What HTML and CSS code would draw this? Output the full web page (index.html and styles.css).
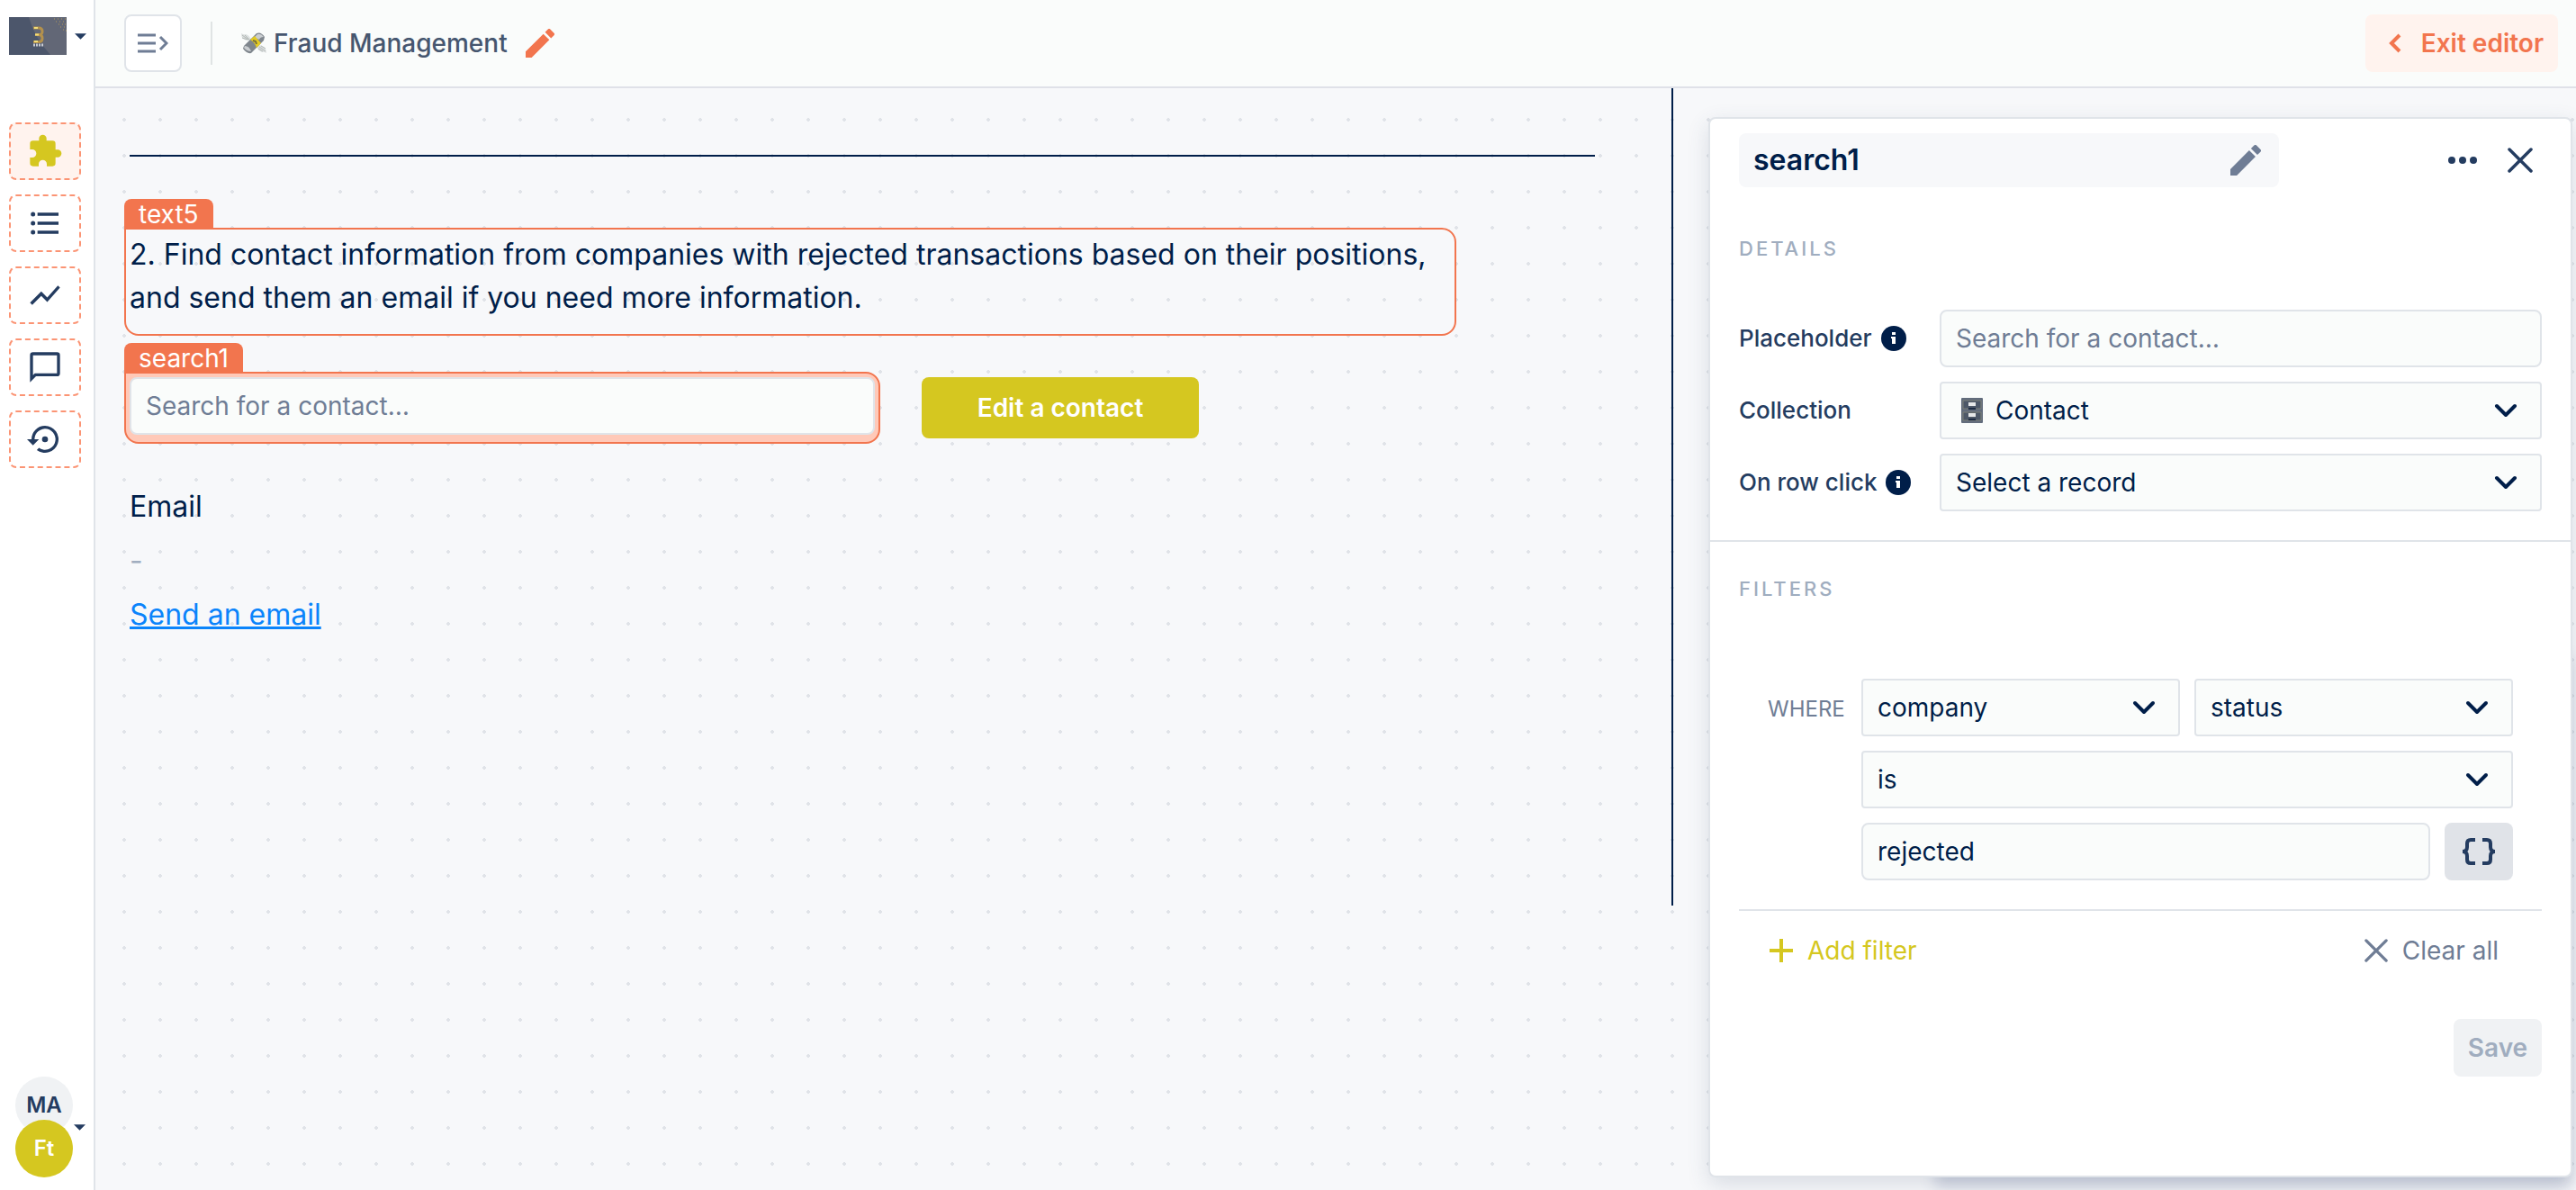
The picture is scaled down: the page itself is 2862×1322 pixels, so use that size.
FILE: index.html
```html
<!DOCTYPE html>
<html lang="en">
<head>
<meta charset="utf-8">
<title>Fraud Management</title>
<link rel="stylesheet" href="styles.css">
</head>
<body>
<svg class="sprite" aria-hidden="true">
  <symbol id="chevron" viewBox="0 0 26 16"><path d="M3 3l10 10L23 3" fill="none" stroke="currentColor" stroke-width="4" stroke-linecap="round" stroke-linejoin="round"/></symbol>
  <symbol id="cross" viewBox="0 0 28 28"><path d="M2 2l24 24M26 2L2 26" fill="none" stroke="currentColor" stroke-width="3.500" stroke-linecap="round"/></symbol>
  <symbol id="pencil" viewBox="3 3 18 18"><path d="M3 17.25V21h3.75L17.81 9.94l-3.75-3.75L3 17.25zM20.71 7.04a1 1 0 0 0 0-1.41l-2.34-2.34a1 1 0 0 0-1.41 0l-1.83 1.83 3.75 3.75 1.83-1.83z" fill="currentColor"/></symbol>
  <symbol id="caret" viewBox="0 0 14 7"><path d="M0 0h14L7 7z" fill="currentColor"/></symbol>
  <symbol id="info" viewBox="0 0 28 28"><circle cx="14" cy="14" r="14" fill="currentColor"/><path d="M12 7h4v3h-4zM11 12h5v8h-4v-6h-1z" fill="#fff"/></symbol>
</svg>

<nav class="sidebar" aria-label="Main">
  <button class="workspace-switch" aria-label="Switch workspace">
    <svg class="logo" viewBox="0 0 64 42">
      <rect width="64" height="42" fill="#4c566b"/>
      <path d="M22 0h42v42H46Q28 22 22 0z" fill="#626776"/>
      <path d="M50 2h1M54 2h1M58 2h1M62 2h1M52 5h1M56 5h1M60 5h1M55 8h1M59 8h1M62 8h1M57 11h1M61 11h1M60 14h1M63 15h1" stroke="#b39a5d" stroke-width="1"/>
      <path d="M27 12h6q4 0 4 4t-4 3.500h-4 4q4 0 4 4t-4 4h-6" fill="none" stroke="#b4914c" stroke-width="3"/>
      <path d="M28 12h4M29 19.500h4M28 27h4" stroke="#f3e07a" stroke-width="2"/>
      <path d="M27 31h11" stroke="#c9ccd3" stroke-width="3" stroke-dasharray="2 1"/>
    </svg>
    <svg class="caret"><use href="#caret"/></svg>
  </button>
  <ul class="tools">
    <li><button class="tool tool-active" aria-label="Apps"><svg viewBox="0 0 24 24"><path fill="currentColor" d="M20.500 11H19V7a2 2 0 0 0-2-2h-4V3.500a2.500 2.500 0 0 0-5 0V5H4a2 2 0 0 0-2 2v3.800h1.500a2.700 2.700 0 0 1 0 5.400H2V20a2 2 0 0 0 2 2h3.800v-1.500a2.700 2.700 0 0 1 5.400 0V22H17a2 2 0 0 0 2-2v-4h1.500a2.500 2.500 0 0 0 0-5z"/></svg></button></li>
    <li><button class="tool" aria-label="Collections"><svg viewBox="0 0 24 24"><path fill="currentColor" d="M7 5h14v2H7zM7 11h14v2H7zM7 17h14v2H7z"/><circle cx="4" cy="6" r="1.500" fill="currentColor"/><circle cx="4" cy="12" r="1.500" fill="currentColor"/><circle cx="4" cy="18" r="1.500" fill="currentColor"/></svg></button></li>
    <li><button class="tool" aria-label="Analytics"><svg viewBox="0 0 24 24"><path fill="currentColor" d="M3.500 18.490l6-6.010 4 4L22 6.920l-1.410-1.410-7.090 7.970-4-4L2 16.990z"/></svg></button></li>
    <li><button class="tool" aria-label="Messages"><svg viewBox="0 0 24 24"><path fill="currentColor" d="M20 2H4a2 2 0 0 0-2 2v18l4-4h14a2 2 0 0 0 2-2V4a2 2 0 0 0-2-2zm0 14H5.200L4 17.200V4h16v12z"/></svg></button></li>
    <li><button class="tool" aria-label="History"><svg viewBox="0 0 24 24"><path fill="currentColor" d="M14 12a2 2 0 1 0-4 0 2 2 0 0 0 4 0zM12 3a9 9 0 0 0-9 9H0l4 4 4-4H5a7 7 0 1 1 2.940 5.700l-1.420 1.440A9 9 0 1 0 12 3z"/></svg></button></li>
  </ul>
  <button class="account" aria-label="Account">
    <span class="avatars"><span class="avatar">MA</span><span class="avatar avatar-app">Ft</span></span>
    <svg class="caret"><use href="#caret"/></svg>
  </button>
</nav>

<div class="main">
  <header class="topbar">
    <button class="toggle" aria-label="Expand menu"><svg viewBox="0 0 34 26"><path d="M0 4h20M0 13h20M0 22h20" stroke="currentColor" stroke-width="3" fill="none"/><path d="M25 6l7 7-7 7" stroke="currentColor" stroke-width="3" fill="none"/></svg></button>
    <span class="separator"></span>
    <h1 class="page-title">
      <svg class="emoji" viewBox="0 0 28 24">
        <path d="M10 9Q0 10 0 1q3 2 5 1 4 1 6 6zM18 14q10 0 10 9-3-2-5-1-5-2-6-7z" fill="#dde1e1"/>
        <path d="M1 3l7 5M4 3l5 5M1 6l6 2M20 16l7 5M19 18l5 3M22 15l5 3" stroke="#b3b9b6" stroke-width="1"/>
        <path d="M17 1q5-2 9 4l-1 4L11 23q-5 1-9-5l1-3z" fill="#7f868d"/>
        <path d="M18 2q4-1 7 3-4 0-5 3-4-1-5-3zM4 15q5 0 7 6-5 0-8-4z" fill="#c9cdd0"/>
        <path d="M10 8l5-4 7 8-5 5q-2-6-7-9z" fill="#e4cb22"/>
        <path d="M13 9l3 1 1 3" fill="none" stroke="#77713c" stroke-width="2"/>
      </svg>
      Fraud Management
    </h1>
    <button class="icon-button rename" aria-label="Rename page"><svg><use href="#pencil"/></svg></button>
    <button class="exit"><svg viewBox="0 0 14 22"><path d="M12 2L3 11l9 9" fill="none" stroke="currentColor" stroke-width="4"/></svg>Exit editor</button>
  </header>

  <div class="workspace">
    <main class="canvas">
      <div class="block block-rule"><hr></div>
      <section class="block block-text selected">
        <span class="tag">text5</span>
        <p>2. Find contact information from companies with rejected transactions based on their positions, and send them an email if you need more information.</p>
      </section>
      <section class="block block-search selected selected-current">
        <span class="tag">search1</span>
        <input class="field" type="search" placeholder="Search for a contact…" aria-label="Search for a contact">
      </section>
      <div class="block block-button"><button class="primary">Edit a contact</button></div>
      <dl class="block block-email"><dt>Email</dt><dd>-</dd></dl>
      <div class="block block-link"><a href="#email">Send an email</a></div>
    </main>

    <aside class="panel">
      <header class="panel-head">
        <label class="name"><input type="text" value="search1" aria-label="Component name"><svg><use href="#pencil"/></svg></label>
        <button class="icon-button more" aria-label="More"><svg viewBox="0 0 32 8"><circle cx="4" cy="4" r="4" fill="currentColor"/><circle cx="16" cy="4" r="4" fill="currentColor"/><circle cx="28" cy="4" r="4" fill="currentColor"/></svg></button>
        <button class="icon-button close" aria-label="Close"><svg><use href="#cross"/></svg></button>
      </header>
      <section class="details">
        <h2>Details</h2>
        <div class="row">
          <label for="placeholder">Placeholder <svg><use href="#info"/></svg></label>
          <input class="field" id="placeholder" type="text" placeholder="Search for a contact…">
        </div>
        <div class="row">
          <label for="collection">Collection</label>
          <span class="select has-icon">
            <svg class="cabinet" viewBox="0 0 24 28"><rect width="24" height="28" rx="1" fill="#626c7c"/><path d="M2 3h20v9H2zM2 16h20v9H2z" fill="#4d5868" stroke="#7c8078"/><path d="M8 5h8v4H8zM8 17h8v4H8z" fill="#e6e8e9"/><path d="M8 12h8M8 24h8" stroke="#1d2b43" stroke-width="2"/></svg>
            <select class="field" id="collection"><option>Contact</option></select>
            <svg class="chevron"><use href="#chevron"/></svg>
          </span>
        </div>
        <div class="row">
          <label for="click">On row click <svg><use href="#info"/></svg></label>
          <span class="select"><select class="field" id="click"><option>Select a record</option></select><svg class="chevron"><use href="#chevron"/></svg></span>
        </div>
      </section>
      <section class="filters">
        <h2>Filters</h2>
        <div class="conditions">
          <span class="where">WHERE</span>
          <div class="condition">
            <span class="select"><select class="field" aria-label="Relation"><option>company</option></select><svg class="chevron"><use href="#chevron"/></svg></span>
            <span class="select"><select class="field" aria-label="Property"><option>status</option></select><svg class="chevron"><use href="#chevron"/></svg></span>
            <span class="select wide"><select class="field" aria-label="Operator"><option>is</option></select><svg class="chevron"><use href="#chevron"/></svg></span>
            <div class="value wide">
              <input class="field" type="text" value="rejected" aria-label="Value">
              <button class="braces" aria-label="Insert variable"><svg viewBox="0 0 38 30"><path d="M15 2h-5q-4 0-4 4v4q0 5-5 5 5 0 5 5v4q0 4 4 4h5M23 2h5q4 0 4 4v4q0 5 5 5-5 0-5 5v4q0 4-4 4h-5" fill="none" stroke="currentColor" stroke-width="4"/></svg></button>
            </div>
          </div>
        </div>
        <div class="filter-actions">
          <button class="add"><svg viewBox="0 0 26 26"><path d="M13 0v26M0 13h26" stroke="currentColor" stroke-width="4"/></svg>Add filter</button>
          <button class="clear"><svg><use href="#cross"/></svg>Clear all</button>
        </div>
        <button class="save" disabled>Save</button>
      </section>
    </aside>
  </div>
</div>
</body>
</html>
```
FILE: styles.css
```css
:root {
  --ink: #001e49;
  --navy: #243c60;
  --slate: #6f7d95;
  --mist: #a0adbf;
  --line: #e0e4e9;
  --coral: #f2754e;
  --peach: #fff3ee;
  --lime: #d5c720;
  --paper: #f7f8fa;
  --field: #fafcfb;
}

* { box-sizing: border-box; }

body {
  margin: 0;
  min-height: 100vh;
  display: flex;
  background: #fff;
  color: var(--ink);
  font: 28px/40px Inter, sans-serif;
}

button, input, select { font: inherit; color: inherit; }
button { border: 0; padding: 0; background: none; display: flex; align-items: center; justify-content: center; }
svg { display: block; flex: none; }
h1, h2, p, ul, dl, dd { margin: 0; padding: 0; }
.sprite { position: absolute; width: 0; height: 0; }

/* Sidebar */
.sidebar {
  flex: none;
  width: 106px;
  padding: 19px 8px 14px 10px;
  border-right: 2px solid var(--line);
  display: flex;
  flex-direction: column;
  color: var(--navy);
}
.workspace-switch { height: 42px; gap: 9px; justify-content: flex-start; }
.logo { width: 64px; height: 42px; }
.caret { width: 13px; height: 7px; }
.tools { list-style: none; margin: 75px 0 auto; display: grid; gap: 16px; }
.tool { width: 80px; height: 64px; border: 2px dashed #fb9474; border-radius: 8px; }
.tool svg { width: 40px; height: 40px; }
.tool-active { background: var(--peach); color: var(--lime); }
.account { gap: 1px; margin-left: 7px; justify-content: flex-start; }
.avatars { display: block; }
.avatar {
  width: 64px;
  height: 64px;
  border-radius: 50%;
  background: #f0f2f4;
  display: grid;
  place-items: center;
  font-size: 24px;
  font-weight: 600;
}
.avatar-app { position: relative; margin-top: -16px; background: var(--lime); color: #fff; }

/* Top bar */
.main { flex: 1; min-width: 0; display: flex; flex-direction: column; }
.topbar {
  height: 98px;
  padding: 0 20px 0 32px;
  border-bottom: 2px solid #dfe1e8;
  background: #fafcfb;
  display: flex;
  align-items: center;
}
.toggle { width: 64px; height: 64px; background: #fff; border: 2px solid var(--line); border-radius: 8px; color: var(--slate); }
.toggle svg { width: 34px; height: 26px; }
.separator { width: 2px; height: 48px; margin: 0 32px; background: #e0e4e4; }
.page-title { display: flex; align-items: center; gap: 8px; font-size: 28px; font-weight: 500; color: #46566f; }
.emoji { width: 28px; height: 24px; }
.rename { margin-left: 20px; color: var(--coral); }
.rename svg { width: 32px; height: 32px; }
.exit {
  height: 64px;
  margin-left: auto;
  padding: 0 16px 0 26px;
  gap: 22px;
  border-radius: 8px;
  background: var(--peach);
  color: var(--coral);
  font-weight: 600;
}
.exit svg { width: 14px; height: 22px; }

/* Dotted workspace */
.workspace {
  flex: 1;
  display: flex;
  isolation: isolate;
  background: var(--paper) radial-gradient(circle at 20px 20px, #e0e3e8 2px, transparent 2px) 12px 15px / 40px 40px;
}
.canvas {
  flex: 1;
  align-self: flex-start;
  min-width: 0;
  min-height: 908px;
  padding: 35px 79px 0 32px;
  border-right: 2px solid var(--ink);
  display: grid;
  grid-template-columns: repeat(41, 1fr);
  grid-auto-rows: 40px;
  font-size: 32px;
  line-height: 48px;
}
.block { min-width: 0; padding: 6px; }
.block-rule { grid-area: 1 / 1 / span 2 / -1; align-self: center; }
.block-rule hr { margin: 0; border: 0; border-top: 2px solid var(--ink); }
.block-text { grid-area: 4 / 1 / span 3 / span 37; }
.block-search { grid-area: 8 / 1 / span 2 / span 21; }
.block-button { grid-area: 8 / 23 / span 2 / span 8; }
.block-email { grid-area: 11 / 1 / span 3 / span 20; display: grid; gap: 12px; align-content: start; }
.block-email dd { color: var(--mist); }
.block-link { grid-area: 14 / 1 / span 2 / span 20; }
.block-link a { color: #0b84fb; text-decoration-thickness: 3px; }

.selected { position: relative; padding: 4px; border: 2px solid var(--coral); border-radius: 0 16px 16px 16px; }
.selected-current { background: #ffc9b8; }
.tag {
  position: absolute;
  left: -2px;
  bottom: 100%;
  padding: 0 16px;
  height: 34px;
  border-radius: 8px 8px 0 0;
  background: var(--coral);
  color: #fff;
  font-size: 28px;
  line-height: 34px;
}
.primary { width: 100%; height: 68px; border-radius: 8px; background: var(--lime); color: #fff; font-size: 28px; font-weight: 600; }

/* Form fields */
.field {
  width: 100%;
  min-width: 0;
  height: 64px;
  padding: 0 16px;
  border: 2px solid var(--line);
  border-radius: 8px;
  background: var(--field);
  font-size: 28px;
  appearance: none;
  outline: 0;
  display: block;
}
.field::placeholder { color: var(--slate); opacity: 1; }
.select { display: grid; align-items: center; min-width: 0; }
.select > * { grid-area: 1 / 1; }
.select .field { border-radius: 4px; }
.chevron { width: 26px; height: 16px; justify-self: end; margin-right: 27px; pointer-events: none; }
.cabinet { width: 24px; height: 28px; margin-left: 24px; z-index: 1; }
.has-icon .field { padding-left: 60px; }

/* Inspector panel */
.panel {
  position: relative;
  flex: none;
  width: 960px;
  margin: 32px 4px 14px 39px;
  border: 2px solid var(--line);
  border-radius: 8px;
  background: #fff;
  box-shadow: 0 8px 24px rgba(60, 80, 110, .16);
}
.panel::before {
  content: "";
  position: absolute;
  z-index: -1;
  inset: 50% 0 0 250px;
  box-shadow: 0 12px 16px rgba(50, 70, 125, .22);
}
.panel-head { display: flex; align-items: center; padding: 16px 42px 0 32px; color: var(--navy); }
.name {
  width: 600px;
  height: 60px;
  margin-right: auto;
  padding: 0 20px 0 16px;
  border-radius: 8px;
  background: var(--paper);
  display: flex;
  align-items: center;
  color: var(--slate);
}
.name input { flex: 1; min-width: 0; padding: 0; border: 0; background: none; color: var(--ink); font-size: 32px; font-weight: 600; }
.name svg { width: 34px; height: 34px; }
.more svg { width: 32px; height: 8px; }
.close { margin-left: 34px; }
.close svg { width: 28px; height: 28px; }
.panel h2 { color: var(--mist); font-size: 22px; font-weight: 500; line-height: 32px; letter-spacing: 3px; text-transform: uppercase; }
.details { padding: 52px 32px 32px; border-bottom: 2px solid var(--line); display: grid; gap: 16px; }
.details h2 { margin-bottom: 36px; }
.row { display: grid; grid-template-columns: 223px 1fr; align-items: center; }
.row label { display: flex; align-items: center; gap: 10px; font-size: 26px; font-weight: 500; color: var(--navy); }
.row label svg { width: 28px; height: 28px; color: var(--ink); }
.filters { padding: 36px 32px 0; }
.conditions { margin-top: 84px; padding: 0 32px 32px; display: grid; grid-template-columns: 104px 1fr; border-bottom: 2px solid var(--line); }
.where { color: var(--slate); font-size: 24px; line-height: 68px; }
.condition { display: grid; grid-template-columns: 1fr 1fr; gap: 16px; min-width: 0; }
.wide { grid-column: 1 / -1; }
.value { display: flex; gap: 16px; }
.braces { flex: none; width: 76px; height: 64px; border-radius: 8px; background: #e0e3e8; color: var(--navy); }
.braces svg { width: 38px; height: 30px; }
.filter-actions { display: flex; justify-content: space-between; padding: 24px 48px 0 34px; }
.filter-actions button { gap: 16px; }
.filter-actions svg { width: 26px; height: 26px; }
.add { color: var(--lime); }
.clear { color: var(--slate); }
.save { width: 98px; height: 64px; margin: 56px 0 0 auto; border-radius: 8px; background: #f0f2f4; color: var(--mist); font-weight: 600; }
```
